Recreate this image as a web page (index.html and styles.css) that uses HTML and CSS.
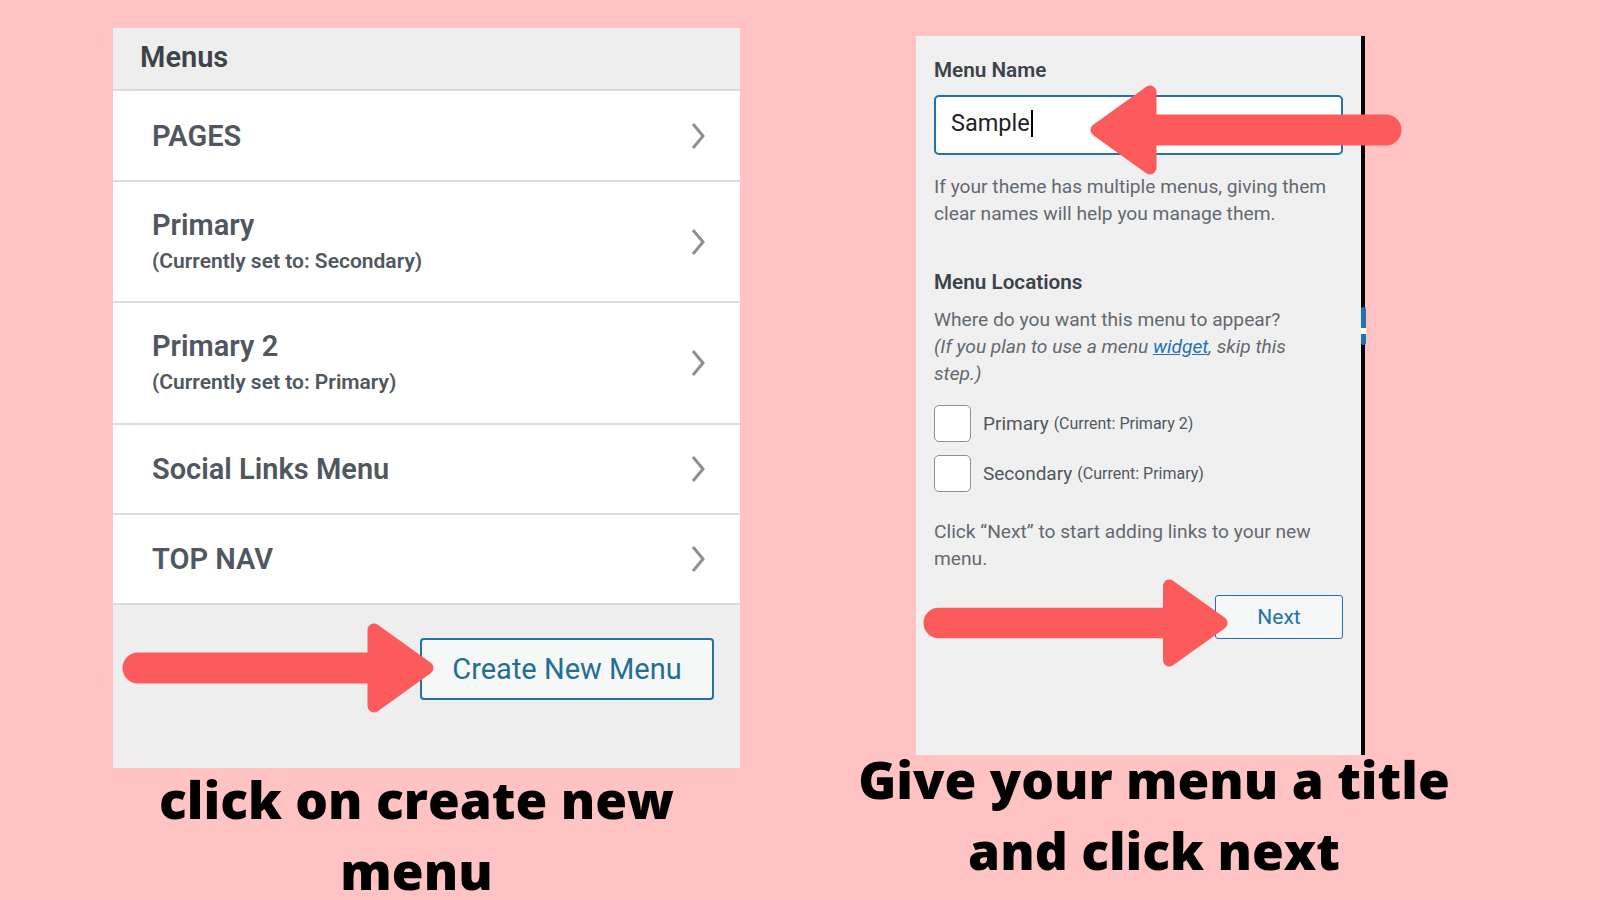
FILE: index.html
```html
<!DOCTYPE html>
<html>
<head>
<meta name="viewport" content="width=device-width, initial-scale=1">
<title>create a menu</title>
<link rel="stylesheet" href="styles.css">
</head>
<body>

<div class="page">

  <div class="colLeft">
    <div class="menusPanel">
      <div class="panelHead">Menus</div>

      <div class="menuRow first">
        <span class="rowTitle">PAGES</span>
        <svg class="chevron" width="16" height="28" viewBox="0 0 16 28"><polyline points="3,2 13,14 3,26" /></svg>
      </div>

      <div class="menuRow tall">
        <span>
          <span class="rowTitle">Primary</span>
          <span class="rowSub">(Currently set to: Secondary)</span>
        </span>
        <svg class="chevron" width="16" height="28" viewBox="0 0 16 28"><polyline points="3,2 13,14 3,26" /></svg>
      </div>

      <div class="menuRow tall taller">
        <span>
          <span class="rowTitle">Primary 2</span>
          <span class="rowSub">(Currently set to: Primary)</span>
        </span>
        <svg class="chevron" width="16" height="28" viewBox="0 0 16 28"><polyline points="3,2 13,14 3,26" /></svg>
      </div>

      <div class="menuRow">
        <span class="rowTitle">Social Links Menu</span>
        <svg class="chevron" width="16" height="28" viewBox="0 0 16 28"><polyline points="3,2 13,14 3,26" /></svg>
      </div>

      <div class="menuRow">
        <span class="rowTitle">TOP NAV</span>
        <svg class="chevron" width="16" height="28" viewBox="0 0 16 28"><polyline points="3,2 13,14 3,26" /></svg>
      </div>

      <div class="panelFoot">
        <button class="createBtn">Create New Menu</button>
      </div>

      <svg class="arrow arrowCreate" width="312" height="90" viewBox="0 0 312 90">
        <line x1="16" y1="45" x2="262" y2="45" />
        <polygon points="252,7 252,83 305,45" />
      </svg>
    </div>

    <div class="caption captionLeft">click on create new<br>menu</div>
  </div>

  <div class="colRight">
    <div class="namePanel">
      <div class="fieldLabel">Menu Name</div>
      <div class="nameInput">Sample<span class="caret"></span></div>
      <p class="help nameHelp">If your theme has multiple menus, giving them clear names will help you manage them.</p>

      <div class="fieldLabel locLabel">Menu Locations</div>
      <p class="help whereText">Where do you want this menu to appear?<br>
        <em>(If you plan to use a menu <a href="#">widget</a>, skip this<br>step.)</em></p>

      <div class="checkList">
        <label class="checkRow"><span class="box"></span>Primary <small>(Current: Primary 2)</small></label>
        <label class="checkRow"><span class="box"></span>Secondary <small>(Current: Primary)</small></label>
      </div>

      <p class="help clickText">Click “Next” to start adding links to your new menu.</p>

      <div class="nextRow">
        <button class="nextBtn">Next</button>
      </div>

      <span class="scrollMark"></span>

      <svg class="arrow arrowName" width="312" height="90" viewBox="0 0 312 90">
        <line x1="16" y1="45" x2="262" y2="45" />
        <polygon points="252,7 252,83 305,45" />
      </svg>

      <svg class="arrow arrowNext" width="313" height="88" viewBox="0 0 312 90">
        <line x1="16" y1="45" x2="262" y2="45" />
        <polygon points="252,7 252,83 305,45" />
      </svg>
    </div>

    <div class="caption captionRight">Give your menu a title<br>and click next</div>
  </div>

</div>

</body>
</html>
```

FILE: styles.css
```css
body {
    margin: 0;
    background-color: #ffc3c3;
    font-family: Roboto, "Liberation Sans", sans-serif;
    overflow: hidden;
}

.page {
    display: flex;
    align-items: flex-start;
    padding: 28px 0 0 113px;
    height: 872px;
}

/* left screenshot */

.colLeft {
    width: 627px;
}

.menusPanel {
    position: relative;
    height: 740px;
    background-color: #eeeeee;
    display: flex;
    flex-direction: column;
}

.panelHead {
    height: 63px;
    padding: 0 0 4px 27px;
    box-sizing: border-box;
    display: flex;
    align-items: center;
    border-bottom: 2px solid #dcdcde;
    font-size: 29px;
    font-weight: 600;
    color: #3c434a;
}

.menuRow {
    height: 90px;
    box-sizing: border-box;
    background-color: #fff;
    border-bottom: 2px solid #dcdcde;
    padding: 0 34px 0 39px;
    display: flex;
    align-items: center;
    justify-content: space-between;
    color: #50575e;
}

.menuRow.first {
    height: 91px;
}

.menuRow.tall {
    height: 121px;
}

.menuRow.taller {
    height: 122px;
}

.rowTitle {
    display: block;
    font-size: 29px;
    font-weight: 600;
    line-height: 36px;
}

.rowSub {
    display: block;
    margin-top: 2px;
    font-size: 21px;
    font-weight: 600;
    line-height: 32px;
}

.chevron polyline {
    fill: none;
    stroke: #8c8f94;
    stroke-width: 3;
}

.panelFoot {
    flex: 1;
    display: flex;
    justify-content: flex-end;
    align-items: flex-start;
    padding: 33px 26px 0 0;
}

.createBtn {
    width: 294px;
    height: 62px;
    background-color: #f6f7f7;
    border: 2px solid #23749c;
    border-radius: 4px;
    color: #1f6f95;
    font-family: Roboto, "Liberation Sans", sans-serif;
    font-size: 29px;
    padding: 0;
}

.caption {
    font-family: "Open Sans", "Liberation Sans", sans-serif;
    font-weight: 800;
    font-size: 51.5px;
    line-height: 71px;
    color: #000;
    text-align: center;
    white-space: nowrap;
}

.captionLeft {
    margin: -4px 20px 0 0;
}

/* right screenshot */

.colRight {
    margin: 8px 0 0 176px;
    width: 449px;
}

.namePanel {
    position: relative;
    height: 719px;
    background-color: #f0f0f1;
    border-right: 4px solid #000;
    padding: 20px 18px 0 18px;
    box-sizing: border-box;
    color: #50575e;
}

.fieldLabel {
    font-size: 20.7px;
    font-weight: 600;
    line-height: 28px;
    color: #3c434a;
}

.nameInput {
    margin-top: 11px;
    height: 60px;
    box-sizing: border-box;
    background-color: #fff;
    border: 2px solid #2271b1;
    border-radius: 5px;
    padding: 0 0 4px 15px;
    display: flex;
    align-items: center;
    font-size: 23.5px;
    color: #1d2327;
}

.caret {
    display: inline-block;
    width: 2px;
    height: 27px;
    margin-left: 1px;
    background-color: #000;
}

.help {
    margin: 17px 0 0 0;
    font-size: 19.2px;
    line-height: 27px;
    color: #646970;
}

.nameHelp {
    margin-top: 18px;
}

.locLabel {
    margin-top: 41px;
}

.whereText {
    margin-top: 10px;
}

.whereText a {
    color: #2271b1;
}

.checkList {
    margin-top: 18px;
    display: flex;
    flex-direction: column;
    gap: 13px;
}

.checkRow {
    display: flex;
    align-items: center;
    height: 37px;
    font-size: 19px;
    color: #50575e;
}

.checkRow small {
    font-size: 16px;
    margin-left: 5px;
}

.box {
    width: 37px;
    height: 37px;
    box-sizing: border-box;
    border: 1.5px solid #8c8f94;
    border-radius: 5px;
    background-color: #fff;
    margin-right: 12px;
}

.clickText {
    margin-top: 26px;
}

.nextRow {
    margin-top: 23px;
    display: flex;
    justify-content: flex-end;
}

.nextBtn {
    width: 128px;
    height: 44px;
    background-color: #f6f7f7;
    border: 1.5px solid #2271b1;
    border-radius: 3px;
    color: #2271b1;
    font-family: Roboto, "Liberation Sans", sans-serif;
    font-size: 21px;
    padding: 0;
}

.scrollMark {
    position: absolute;
    left: 445px;
    top: 271px;
    width: 5px;
    height: 38px;
    border-radius: 2px;
    background: linear-gradient(#2271b1 0 55%, #fff 55% 70%, #2271b1 70%);
}

.captionRight {
    margin: -11px -99px 0 -72px;
}

/* red pointers drawn over the screenshots */

.arrow {
    position: absolute;
}

.arrow line {
    stroke: #fc5b5b;
    stroke-width: 31;
    stroke-linecap: round;
}

.arrow polygon {
    fill: #fc5b5b;
    stroke: #fc5b5b;
    stroke-width: 13;
    stroke-linejoin: round;
}

.arrowCreate {
    left: 9px;
    top: 595px;
}

.arrowName {
    left: 174px;
    top: 49px;
    transform: scaleX(-1);
}

.arrowNext {
    left: 3px;
    top: 543px;
}
```
